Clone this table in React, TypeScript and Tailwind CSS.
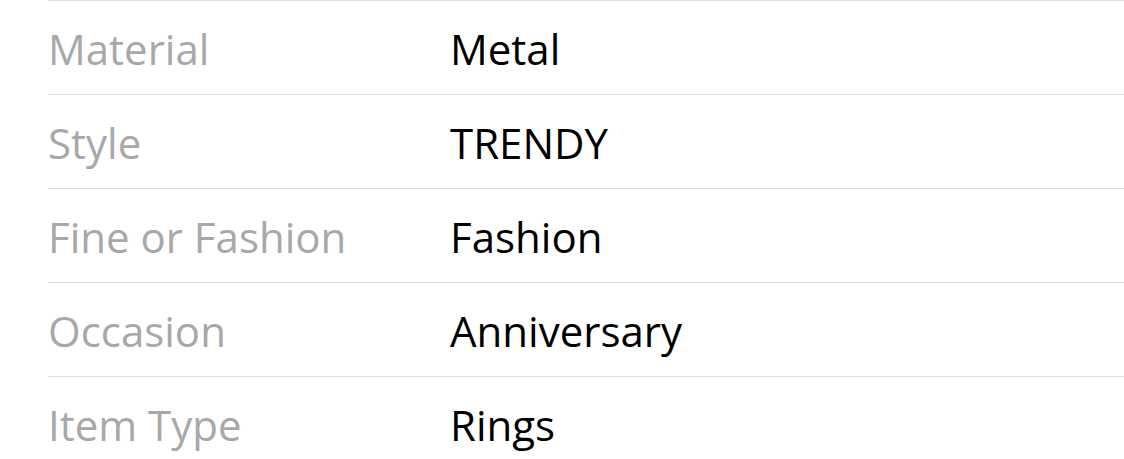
const rows = [
  { label: "Material", value: "Metal" },
  { label: "Style", value: "TRENDY" },
  { label: "Fine or Fashion", value: "Fashion" },
  { label: "Occasion", value: "Anniversary" },
  { label: "Item Type", value: "Rings" },
];

const App = () => {
  return (
    <div className="bg-white pl-12 font-['Open_Sans',sans-serif]">
      {rows.map((row) => (
        <div
          key={row.label}
          className="flex h-[94px] items-center border-t border-[#e0e0e0] pt-0.5 text-[42px]"
        >
          <div className="w-[402px] shrink-0 text-[#a8a8a8]">{row.label}</div>
          <div className="text-black">{row.value}</div>
        </div>
      ))}
    </div>
  );
};

export default App;
